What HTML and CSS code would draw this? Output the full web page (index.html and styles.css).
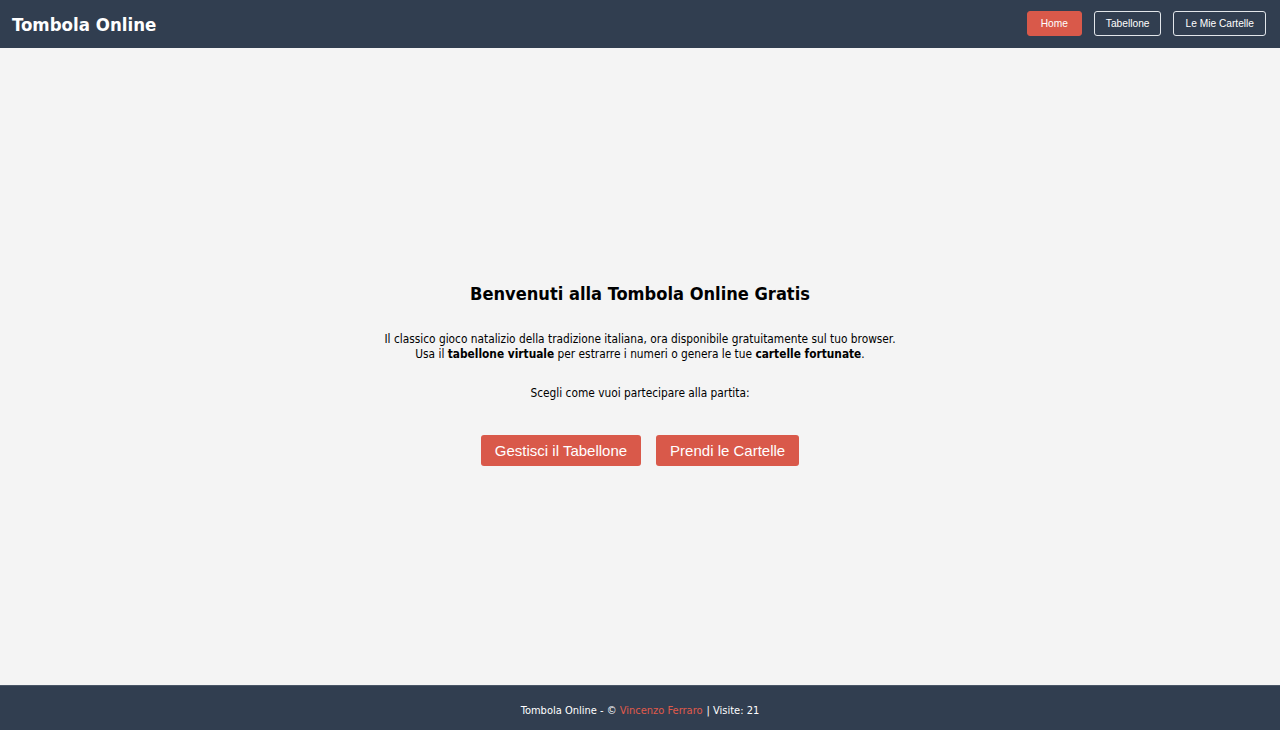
FILE: index.html
```html
<!DOCTYPE html>
<html lang="it">
<head>
    <meta charset="UTF-8">
    <meta name="viewport" content="width=device-width, initial-scale=1.0">
    <title>Tombola Online</title>
    <link rel="stylesheet" href="styles.css">
</head>
<body>
    <header class="topbar">
        <div class="brand">Tombola Online</div>
        <nav class="nav">
            <a href="#" class="nav-btn active">Home</a>
            <a href="#" class="nav-btn">Tabellone</a>
            <a href="#" class="nav-btn">Le Mie Cartelle</a>
        </nav>
    </header>

    <main class="content">
        <h1>Benvenuti alla Tombola Online Gratis</h1>
        <p class="intro">
            Il classico gioco natalizio della tradizione italiana, ora disponibile gratuitamente sul tuo browser.<br>
            Usa il <strong>tabellone virtuale</strong> per estrarre i numeri o genera le tue <strong>cartelle fortunate</strong>.
        </p>
        <p class="choose">Scegli come vuoi partecipare alla partita:</p>
        <div class="actions">
            <a href="#" class="btn">Gestisci il Tabellone</a>
            <a href="#" class="btn">Prendi le Cartelle</a>
        </div>
    </main>

    <footer class="footer">
        Tombola Online - &copy;&nbsp;<a href="#">Vincenzo Ferraro</a> | Visite: 21
    </footer>
</body>
</html>
```

FILE: styles.css
```css
html, body {
    height: 100%;
}
body {
    margin: 0;
    display: flex;
    flex-direction: column;
    background-color: #f4f4f4;
    font-family: "DejaVu Sans Condensed", "DejaVu Sans", sans-serif;
    color: #000;
}
.topbar {
    height: 48px;
    box-sizing: border-box;
    background-color: #313e50;
    display: flex;
    align-items: center;
    justify-content: space-between;
    padding: 0 14px 0 12px;
}
.brand {
    color: #fff;
    font-size: 18.5px;
    font-weight: bold;
}
.nav {
    display: flex;
    gap: 12px;
    margin-top: -1px;
}
.nav-btn {
    font-family: "Liberation Sans", Arial, sans-serif;
    font-size: 10.2px;
    color: #fff;
    text-decoration: none;
    border: 1px solid #e2e6ea;
    border-radius: 3px;
    height: 25px;
    box-sizing: border-box;
    padding: 0 11px;
    display: flex;
    align-items: center;
}
.nav-btn.active {
    background-color: #d9594a;
    border-color: #d9594a;
    padding: 0 13px;
}
.content {
    flex: 1;
    display: flex;
    flex-direction: column;
    align-items: center;
    justify-content: center;
    text-align: center;
    padding-top: 16px;
}
h1 {
    font-size: 18.1px;
    margin: 0 0 28px;
}
.intro {
    font-size: 11.8px;
    line-height: 15px;
    margin: 0 0 24px;
}
.choose {
    font-size: 11.8px;
    margin: 0 0 35px;
}
.actions {
    display: flex;
    gap: 15px;
}
.btn {
    font-family: "Liberation Sans", Arial, sans-serif;
    font-size: 15px;
    color: #fff;
    background-color: #d9594a;
    text-decoration: none;
    border-radius: 3px;
    height: 31px;
    box-sizing: border-box;
    padding: 0 14px;
    display: flex;
    align-items: center;
}
.footer {
    height: 45px;
    background-color: #313e50;
    color: #fff;
    font-size: 11px;
    display: flex;
    align-items: center;
    justify-content: center;
    border-top: 1px solid #4a5667;
    box-sizing: border-box;
    padding-top: 4px;
}
.footer a {
    color: #e05a4b;
    text-decoration: none;
    margin-right: 4px;
}
```
